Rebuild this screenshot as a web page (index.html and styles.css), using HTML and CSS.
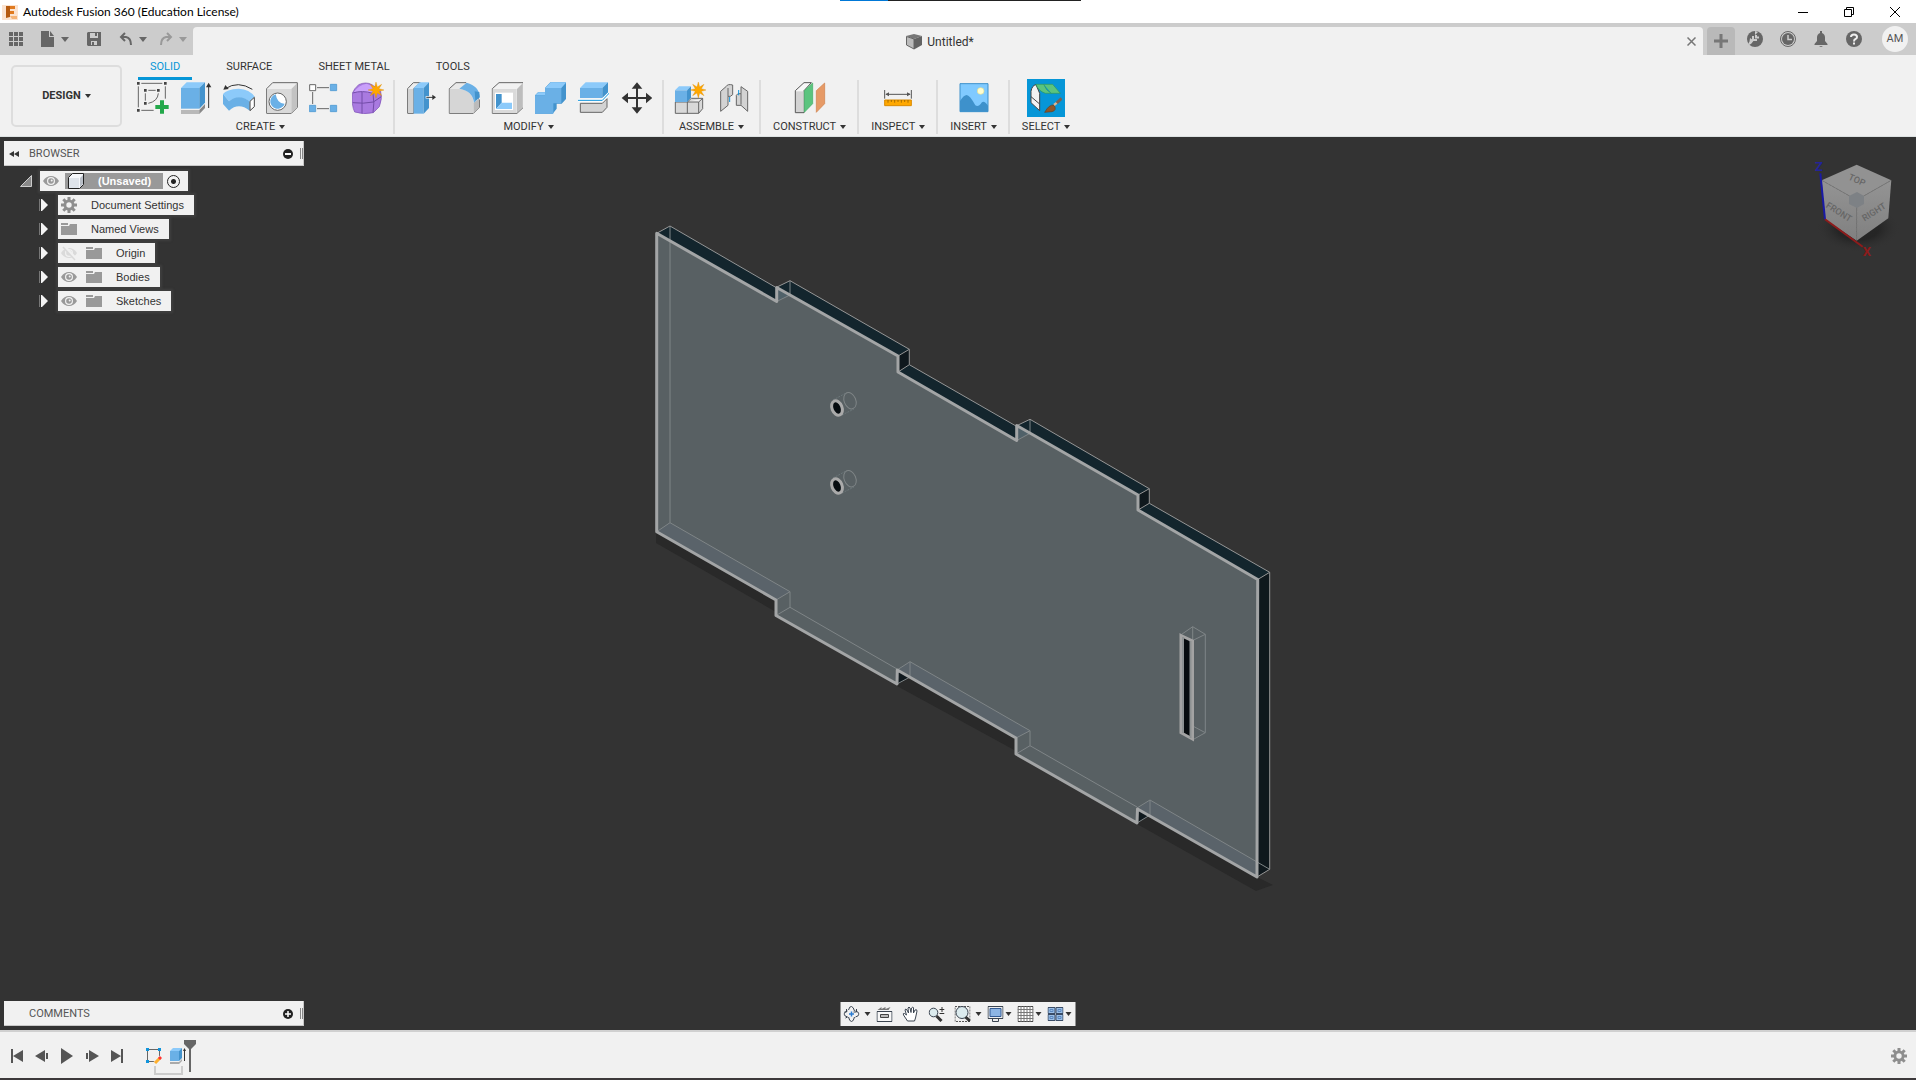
FILE: index.html
```html
<!DOCTYPE html>
<html lang="en">
<head>
    <meta charset="UTF-8">
    <meta name="viewport" content="width=device-width, initial-scale=1.0">
    <title>Autodesk Fusion 360 (Education License)</title>
    <link rel="stylesheet" href="styles.css">
</head>
<body>
    <!-- Shared icons -->
    <svg class="sprite" aria-hidden="true">
        <symbol id="star" viewBox="-24 -24 48 48"><path fill="#ffa800" stroke="#d98a00" stroke-width="1" d="M0-24 4-9 17-17 9-4 24 0 9 4 17 17 4 9 0 24-4 9-17 17-9 4-24 0-9-4-17-17-4-9Z"/></symbol>
        <symbol id="eye" viewBox="0 0 16 16"><path fill="#999" d="M0 8C2 4.500 5 3 8 3s6 1.500 8 5c-2 3.500-5 5-8 5S2 11.500 0 8Z"/><circle cx="8" cy="8" r="4" fill="#f1f1f1"/><circle cx="8" cy="8" r="2.800" fill="#999"/><circle cx="8.700" cy="7.500" r="1" fill="#f1f1f1"/></symbol>
        <symbol id="folder" viewBox="0 0 16 16"><path fill="#999" d="M0 5H8L9 3H16V14H0ZM0 2H7V4H0Z"/><path stroke="#f1f1f1" d="M0 4.500H7.500"/></symbol>
        <symbol id="gear" viewBox="0 0 16 16"><g stroke="#8e8e8e" stroke-width="3"><path d="M8 0V16M0 8H16M2.300 2.300 13.700 13.700M13.700 2.300 2.300 13.700"/></g><circle cx="8" cy="8" r="5.500" fill="#8e8e8e"/><circle cx="8" cy="8" r="2.700" fill="#f1f1f1"/></symbol>
        <symbol id="expand" viewBox="0 0 9 12"><path fill="#777" d="M0 0H1V12H0Z"/><path fill="#f4f4f4" d="M2 0H3L9 6 3 12H2Z"/></symbol>
    </svg>

    <!-- Title Bar -->
    <header class="title-bar">
        <div class="progress-line"></div>
        <svg class="app-logo" viewBox="0 0 16 16"><path fill="#fbe3d0" d="M0 1H16V16H0Z"/><path fill="#e07a1f" d="M4 2H13V5H8V7H12V10H8V13H4Z"/><path fill="#b55a10" d="M4 2H8V13L4 14Z"/><path fill="#f5b477" d="M8 12H15V15H10Z"/></svg>
        <h1>Autodesk Fusion 360 (Education License)</h1>
        <div class="window-buttons">
            <button aria-label="Minimize"><svg viewBox="0 0 12 12"><path d="M1 6.500H11"/></svg></button>
            <button aria-label="Restore"><svg viewBox="0 0 12 12"><path d="M1.500 3.500H8.500V10.500H1.500ZM3.500 3V1.500H10.500V8.500H9"/></svg></button>
            <button aria-label="Close"><svg viewBox="0 0 12 12"><path d="M1 1 11 11M11 1 1 11"/></svg></button>
        </div>
    </header>

    <!-- Document Tabs -->
    <div class="tab-bar">
        <div class="quick-access">
            <button aria-label="Data panel"><svg class="icon-14" viewBox="0 0 14 14" fill="#666"><path d="M0 0h4v4H0zM5 0h4v4H5zM10 0h4v4h-4zM0 5h4v4H0zM5 5h4v4H5zM10 5h4v4h-4zM0 10h4v4H0zM5 10h4v4H5zM10 10h4v4h-4z"/></svg></button>
            <button class="with-caret" aria-label="File"><svg class="icon-14" viewBox="0 0 14 16"><path fill="#666" d="M0 0H8V6H13V16H0Z"/><path fill="#666" d="M9 0 13 5H9Z"/></svg><span class="caret big"></span></button>
            <button aria-label="Save"><svg class="icon-14" viewBox="0 0 14 14"><path fill="#666" d="M0 1 1 0H14V14H1L0 13Z"/><path fill="#ccc" d="M3 1H11V6H3ZM4 9H10V13H4Z"/><path fill="#666" d="M8 1H10V4H8ZM5 10H7V13H5Z"/></svg></button>
            <button class="with-caret" aria-label="Undo"><svg class="icon-14" viewBox="0 0 14 14"><path fill="none" stroke="#666" stroke-width="2" d="M2 5H7Q12 6 12 13M6 1 2 5 6 9"/></svg><span class="caret big"></span></button>
            <button class="with-caret redo" aria-label="Redo"><svg class="icon-14" viewBox="0 0 14 14"><path fill="none" stroke="#999" stroke-width="2" d="M12 5H7Q2 6 2 13M8 1 12 5 8 9"/></svg><span class="caret big faded"></span></button>
        </div>
        <div class="document-tab">
            <div class="document-name">
                <svg class="icon-16" viewBox="0 0 16 16"><path fill="#777" d="M0 2 8 0 16 2 8 5Z"/><path fill="#bbb" stroke="#666" d="M.500 2.500 8 5V15L.500 11Z"/><path fill="#636363" d="M8 5 16 2V11L8 15.500Z"/></svg>
                <span>Untitled*</span>
            </div>
            <button aria-label="Close tab"><svg class="icon-9" viewBox="0 0 9 9"><path stroke="#777" stroke-width="1.500" d="M.500.500 8.500 8.500M8.500.500.500 8.500"/></svg></button>
        </div>
        <button class="new-tab" aria-label="New tab"><svg class="icon-14" viewBox="0 0 14 14"><path stroke="#777" stroke-width="3" d="M7 0V14M0 7H14"/></svg></button>
        <div class="account-bar">
            <button aria-label="Extensions"><svg class="icon-16" viewBox="0 0 16 16"><circle cx="8" cy="8" r="8" fill="#666"/><path fill="none" stroke="#ccc" stroke-width="2" d="M2 13 7 8M6 5V9H10M9 4V6.500H12"/><path fill="#ccc" d="M8 0 11 1 8 4ZM3 7 6 9 5 12 2 14Z"/></svg></button>
            <button aria-label="Job status"><svg class="icon-16" viewBox="0 0 16 16"><circle cx="8" cy="8" r="7.500" fill="none" stroke="#666"/><circle cx="8" cy="8" r="6" fill="#666"/><path fill="none" stroke="#ccc" stroke-width="1.500" d="M8 4V8.500H12"/></svg></button>
            <button aria-label="Notifications"><svg class="icon-16" viewBox="0 0 16 16"><path fill="#666" d="M7 0H9V2Q12 3 12 6.500V10L14.500 13V14H1.500V13L4 10V6.500Q4 3 7 2ZM6 15H10L8 16Z"/></svg></button>
            <button aria-label="Help"><svg class="icon-16" viewBox="0 0 16 16"><circle cx="8" cy="8" r="8" fill="#666"/><path fill="none" stroke="#eee" stroke-width="2" d="M5 6Q5 3.500 8 3.500T11 6Q11 7.500 9.500 8T8 10.500M8 11.500V13.500"/></svg></button>
            <button class="avatar">AM</button>
        </div>
    </div>

    <!-- Ribbon -->
    <div class="ribbon">
        <button class="workspace">DESIGN<span class="caret"></span></button>
        <div class="ribbon-main">
            <nav class="ribbon-tabs">
                <a class="active" href="#solid">SOLID</a>
                <a href="#surface">SURFACE</a>
                <a href="#sheet-metal">SHEET METAL</a>
                <a href="#tools">TOOLS</a>
            </nav>
            <div class="ribbon-groups">
                <div class="group">
                    <div class="tools">
                        <button aria-label="Create sketch"><svg viewBox="0 0 96 96"><path fill="none" stroke="#666" stroke-width="3" d="M13 4H76M4 13V76M85 13V50M13 85H50M34 25H56M25 34V56M34 64Q62 58 64 34"/><path fill="#444" d="M0 0h8v8H0zM81 0h8v8h-8zM0 81h8v8H0zM21 21h8v8h-8zM60 21h8v8h-8zM21 60h8v8h-8z"/><path fill="#23a84a" d="M69 55H81V69H95V81H81V95H69V81H55V69H69Z"/></svg></button>
                        <button aria-label="Extrude"><svg viewBox="0 0 96 96"><path fill="#8ccafa" d="M3 18 20 1H75L58 18Z"/><path fill="#6ab0e6" d="M3 18H58V80H3Z"/><path fill="#4393cd" d="M58 18 75 1V62L58 80Z"/><path fill="#b9b9b9" d="M3 84H58V96H3Z"/><path fill="#888" d="M58 84 75 66V78L58 96Z"/><path stroke="#333" stroke-width="3" d="M86 10V78"/><path fill="#333" d="M86 2 94 16H78Z"/></svg></button>
                        <button aria-label="Revolve"><svg viewBox="0 0 96 96"><path fill="#8ccafa" d="M0 36Q10 22 47 20 80 22 95 44L80 58Q47 36 18 58Z"/><path fill="#6ab0e6" d="M0 36 18 58Q47 34 80 58V86Q47 60 18 86L0 66Z"/><path fill="#fff" stroke="#444" stroke-width="3" d="M81 58 94 46V74L81 86Z"/><path fill="none" stroke="#333" stroke-width="3" d="M7 20Q45-5 88 22"/><path fill="#333" d="M1 23 7 9 17 21Z"/></svg></button>
                        <button aria-label="Hole"><svg viewBox="0 0 96 96"><path fill="#eee" stroke="#666" stroke-width="3" d="M2 20 20 2H94V76L76 94H2Z"/><path fill="#d9d9d9" d="M3 21H75V93H3Z"/><path fill="#c3c3c3" d="M76 21 93 4V75L76 92Z"/><circle cx="35" cy="59" r="26" fill="#fff" stroke="#666" stroke-width="3"/><path fill="#6ab0e6" d="M29 37A22 22 0 1 0 56 65Q34 66 29 37Z"/></svg></button>
                        <button aria-label="Pattern"><svg viewBox="0 0 96 96"><path stroke="#666" stroke-width="3" d="M24 17H60M11 30V66M24 80H60"/><path fill="#fff" stroke="#666" stroke-width="3" d="M2 8H20V26H2Z"/><path fill="#6ab0e6" stroke="#4393cd" stroke-width="2" d="M64 7H83V26H64ZM1 70H20V89H1ZM64 70H83V89H64Z"/></svg></button>
                        <button aria-label="Create form"><svg viewBox="0 0 96 96"><path fill="#a97ae0" stroke="#7b4eb4" stroke-width="2" d="M1 34Q6 20 20 8 42-2 60 8L86 28Q92 50 82 74L64 92Q34 99 8 90-2 70 1 34Z"/><path fill="#c9a0fa" d="M4 32Q20 8 44 5L80 20 62 34Q30 26 4 32Z"/><path fill="none" stroke="#734ca8" stroke-width="3" d="M2 33Q30 24 63 34L84 22M2 62Q34 66 64 60L88 44M30 30V94M63 34Q68 64 63 92"/><use href="#star" x="48" y="0" width="48" height="48"/></svg></button>
                    </div>
                    <button class="group-label">CREATE<span class="caret"></span></button>
                </div>
                <div class="group">
                    <div class="tools">
                        <button aria-label="Press pull"><svg viewBox="0 0 96 96"><path fill="#eee" stroke="#666" stroke-width="3" d="M8 20 25 2H46L26 20V94H8Z"/><path fill="#d3d3d3" d="M9 21H25V92H9Z"/><path fill="#8ccafa" d="M26 18 44 1H72L56 18Z"/><path fill="#6ab0e6" d="M26 18H56V95H26Z"/><path fill="#4393cd" d="M56 18 72 1V78L56 95Z"/><path stroke="#fff" stroke-width="7" d="M62 46H84"/><path stroke="#333" stroke-width="3" d="M64 46H86"/><path fill="#333" d="M93 46 82 38V54Z"/></svg></button>
                        <button aria-label="Fillet"><svg viewBox="0 0 96 96"><path fill="#e9e9e9" stroke="#666" stroke-width="3" d="M4 20 24 2H54L94 54V76L76 94H4Z"/><path fill="#d6d6d6" d="M5 21H34Q74 25 77 64V93H5Z"/><path fill="#bbb" d="M77 62 93 50V76L77 92Z"/><path fill="#6ab0e6" d="M34 20 56 2Q94 12 95 46L78 62Q74 26 34 20Z"/><path fill="#4393cd" d="M80 28 94 30 95 46 82 56Z"/></svg></button>
                        <button aria-label="Shell"><svg viewBox="0 0 96 96"><path fill="#f2f2f2" stroke="#666" stroke-width="3" d="M4 20 24 2H97V76L78 94H4Z"/><path fill="#dadada" d="M5 21H77V93H5Z"/><path fill="#bdbdbd" d="M78 21 95 4V75L78 92Z"/><path fill="#fff" d="M12 32H66V84H12Z"/><path fill="#4393cd" d="M15 36H32V62L15 81Z"/><path fill="#8ccafa" d="M32 62H63V81H15Z"/></svg></button>
                        <button aria-label="Combine"><svg viewBox="0 0 96 96"><path fill="#4393cd" d="M3 40 12 31H33V18L49 1H97V50L83 65H68V80L56 95H3Z"/><path fill="#8ccafa" d="M4 40 13 31H34V18L50 1H97L82 18H38L33 40Z"/><path fill="#6ab0e6" d="M3 40H33V18H82V64H58V95H3Z"/></svg></button>
                        <button aria-label="Split body"><svg viewBox="0 0 96 96"><path fill="#8ccafa" d="M9 18 26 1H93L76 18Z"/><path fill="#6ab0e6" d="M9 18H76V48H9Z"/><path fill="#4393cd" d="M76 18 93 1V32L76 48Z"/><path fill="#d3d3d3" stroke="#666" stroke-width="3" d="M10 64H76L90 50V76L76 91H10Z"/><path fill="none" stroke="#fff" stroke-width="9" d="M3 55H76L97 34"/><path fill="none" stroke="#0f94dc" stroke-width="3" d="M3 55H76L97 33"/></svg></button>
                        <button aria-label="Move"><svg viewBox="0 0 96 96"><path fill="#333" d="M51 1 67 20H54V45H78V32L97 48 78 64V51H54V76H67L51 95 35 76H48V51H24V64L5 48 24 32V45H48V20H35Z"/></svg></button>
                    </div>
                    <button class="group-label">MODIFY<span class="caret"></span></button>
                </div>
                <div class="group">
                    <div class="tools">
                        <button aria-label="New component"><svg viewBox="0 0 96 96"><path fill="#d9d9d9" stroke="#666" stroke-width="3" d="M4 60H40L52 49H86V80L74 94H4ZM40 60V94M40 60H74L86 49M74 60V94"/><path fill="#8ccafa" d="M3 25 15 13H51L39 25Z"/><path fill="#6ab0e6" d="M3 25H39V60H3Z"/><path fill="#4393cd" d="M39 25 51 13V47L39 60Z"/><use href="#star" x="49" y="0" width="48" height="48"/></svg></button>
                        <button aria-label="Joint"><svg viewBox="0 0 96 96"><path fill="#d3d3d3" stroke="#666" stroke-width="3" d="M11 28 28 13Q32 5 47 9V38L40 43H33V70L11 88ZM72 14 92 28V88L72 70H58V40Q60 33 72 35Z"/><path stroke="#666" stroke-width="3" d="M33 18V43M72 35V68"/><path stroke="#0f94dc" stroke-width="3" d="M38 45V60M65 24V40"/></svg></button>
                    </div>
                    <button class="group-label">ASSEMBLE<span class="caret"></span></button>
                </div>
                <div class="group single">
                    <div class="tools">
                        <button aria-label="Construct plane"><svg viewBox="0 0 96 96"><path fill="#f7f7f7" stroke="#555" stroke-width="3" d="M4 26 30 2H52L30 26V92H4Z"/><path fill="#d3d3d3" d="M6 28H29V90H6Z"/><path fill="#5bc47e" stroke="#3eaa62" stroke-width="2" d="M31 26 56 3V65L31 91Z"/><path fill="#e69a66" stroke="#cf7f49" stroke-width="2" d="M67 26 92 3V65L67 91Z"/></svg></button>
                    </div>
                    <button class="group-label">CONSTRUCT<span class="caret"></span></button>
                </div>
                <div class="group single">
                    <div class="tools">
                        <button aria-label="Measure"><svg viewBox="0 0 96 96"><path stroke="#555" stroke-width="3" d="M8 24V50M88 24V50M12 37H84"/><path fill="#555" d="M10 37 21 31V43ZM86 37 75 31V43Z"/><path fill="#ffa800" stroke="#d98a00" stroke-width="3" d="M8 54H88V71H8Z"/><path stroke="#7c5200" stroke-width="2" d="M18 54V62M28 54V60M38 54V62M48 54V60M58 54V62M68 54V60M78 54V62"/></svg></button>
                    </div>
                    <button class="group-label">INSPECT<span class="caret"></span></button>
                </div>
                <div class="group single">
                    <div class="tools">
                        <button aria-label="Insert image"><svg viewBox="0 0 96 96"><path fill="#80caff" stroke="#3e91cb" stroke-width="3" d="M6 5H90V89H6Z"/><path fill="#3e91cb" d="M6 57Q17 39 26 39T52 70Q60 76 68 66 76 50 90 71V89H6Z"/><circle cx="68" cy="27" r="10" fill="#fffdd0" stroke="#e5df8f" stroke-width="2"/></svg></button>
                    </div>
                    <button class="group-label">INSERT<span class="caret"></span></button>
                </div>
                <div class="group single last">
                    <div class="tools">
                        <button class="selected" aria-label="Select"><svg viewBox="0 0 96 96"><path fill="#f2f2f2" stroke="#444" stroke-width="3" d="M3 28Q6 10 18 8L29 34V86L3 62ZM3 44 29 66"/><path fill="#5bc47e" stroke="#32975a" stroke-width="2" d="M18 7H68L91 34H46Q24 26 18 7ZM41 7Q48 26 64 34"/><path fill="#8e5628" stroke="#644021" stroke-width="2" d="M44 91Q57 67 72 69 82 85 66 89Z"/><path stroke="#dab695" stroke-width="7" d="M72 69 81 62"/><path stroke="#7b604f" stroke-width="9" d="M80 63 95 49"/></svg></button>
                    </div>
                    <button class="group-label">SELECT<span class="caret"></span></button>
                </div>
            </div>
        </div>
    </div>

    <!-- Model Viewport -->
    <main class="viewport">
        <svg class="model" viewBox="0 137 1916 893" aria-label="Tabbed plate">
            <path fill="#292929" d="M656 532 776 600V612L656 543ZM897 684 1016 738V750ZM897 670 1016 738V751L897 686ZM1137 810 1257 877 1273 885 1256 891 1137 824Z"/>
            <!-- top faces -->
            <path fill="#13252d" d="M656.700 233.300 670 226 776 287V301.500ZM776.700 287.500 790 280.700 909.300 349.300 898 356ZM898 372 909.300 364.700 1016.700 426V440.500ZM1016.700 425.500 1030 419.300 1149.300 488.700 1138 495ZM1138 510 1149.300 503.300 1269.700 572.300 1257.700 579.500Z"/>
            <!-- right faces -->
            <path fill="#0f181d" d="M898 356 909.300 349.300V364.700L898 372ZM1138 495 1149.300 488.700V503.300L1138 510ZM1257.700 579.500 1269.700 572.300V869.300L1257 877ZM897 684V670L910 677ZM1137 823V809L1150 815Z"/>
            <path fill="#586063" d="M656.700 233.300 776.700 301.500V287.500L898 356V372L1016.700 440.500V425.500L1138 495V510L1257.700 579.500 1257 877 1137.500 809 1137 823 1016 754V738L897.300 670 897 684 776 615.500V600L656.700 531.700Z"/>
            <path fill="#5a636a" d="M670 522.700 790 591.700 776 600 656.700 531.700ZM910 661.700 1030 730.700 1016 738 897 670ZM1150 800 1257 862V877L1137.500 809Z"/>
            <path fill="#506169" d="M776.700 287.500 790 295 776.700 301.500ZM1016.700 425.500 1030 433.300 1016.700 440.500Z"/>
            <!-- hidden edges -->
            <g fill="none" stroke="#7f8587">
                <path d="M670 226V522.700L790 591.700V607.300L897 669M656.700 531.700 670 522.700M776 600 790 591.700M776 615.500 790 607.300M897 670 910 661.700 1030 730.700V745.700L1137 807M910 661.700V677L897 684M1016 738 1030 730.700M1016 754 1030 745.700M1137 808 1150 800 1269.700 869.300M1150 800V815L1137 823M776.700 301.500 790 295V280.700M1016.700 440.500 1030 433.300V419.300"/>
                <path d="M1180.700 635 1192.700 626.700 1205.300 634.300V732.700L1192.300 740M1192.300 640.700 1205.300 634.300M1192.700 626.700V640M1180.700 732.700 1192.700 726 1205.300 732.700"/>
                <ellipse cx="850" cy="400.700" rx="5.800" ry="8.500" transform="rotate(-22 850 400.700)"/>
                <ellipse cx="850" cy="478.700" rx="5.800" ry="8.500" transform="rotate(-22 850 478.700)"/>
                <path stroke-dasharray="2 1" stroke="#6b7679" d="M833 400 846 393M842 415 854 409M833 478 846 471M842 493 854 487"/>
            </g>
            <g fill="none" stroke="#969696">
                <path d="M656.700 233.300 670 226 776 287.500 790 280.700 909.300 349.300V364.700L1016 426 1030 419.300 1149.300 488.700V503.300L1269.700 572.300V869.300L1257 877M898 356 909.300 349.300M898 372 909.300 364.700M1138 495 1149.300 488.700M1138 510 1149.300 503.300M1257.700 579.500 1269.700 572.300"/>
            </g>
            <!-- front outline -->
            <path fill="none" stroke="#a3a5a6" stroke-width="3" stroke-linejoin="round" d="M656.700 233.300 776.700 301.500V287.500L898 356V372L1016.700 440.500V425.500L1138 495V510L1257.700 579.500 1257 877 1137.500 809 1137 823 1016 754V738L897.300 670 897 684 776 615.500V600L656.700 531.700Z"/>
            <path fill="#070b0e" stroke="#a3a3a3" stroke-width="3" d="M1181 635.500 1192.500 641V739L1181 732.700Z"/>
            <path stroke="#8d9192" stroke-width="2" d="M1183 637V733M1190.500 641V738"/>
            <g fill="#060c10" stroke="#aaa" stroke-width="3">
                <ellipse cx="837" cy="408" rx="5" ry="7.500" transform="rotate(-22 837 408)"/>
                <ellipse cx="837" cy="486" rx="5" ry="7.500" transform="rotate(-22 837 486)"/>
            </g>
        </svg>

        <!-- Browser -->
        <section class="browser">
            <div class="panel">
                <button aria-label="Collapse"><svg class="icon-10" viewBox="0 0 10 10"><path fill="#333" d="M0 5 5 2V8ZM5 5 10 2V8Z"/></svg></button>
                <h2>BROWSER</h2>
                <button aria-label="Hide browser"><svg class="icon-10" viewBox="0 0 10 10"><circle cx="5" cy="5" r="5" fill="#222"/><path stroke="#fff" stroke-width="2" d="M2 5H8"/></svg></button>
                <span class="grip"></span>
            </div>
            <ul class="tree">
                <li class="root">
                    <svg class="icon-12" viewBox="0 0 12 12"><path fill="#888" stroke="#ccc" d="M.500 11.500 11.500.500V11.500Z"/></svg>
                    <div class="node">
                        <svg class="icon-16"><use href="#eye"/></svg>
                        <label class="selected-name" for="activeComponent">
                            <svg class="icon-16" viewBox="0 0 16 16"><path fill="#f5f7fa" stroke="#222" d="M.500 4.500 4.500.500H15.500V11.500L11.500 15.500H.500Z"/><path fill="#dfe4ea" d="M1 5H11V15H1Z"/><path fill="#b9bfc7" d="M12 5 15 2V11L12 14Z"/></svg>
                            <span>(Unsaved)</span>
                        </label>
                        <input type="radio" id="activeComponent" name="component" checked>
                    </div>
                </li>
                <li>
                    <svg class="arrow"><use href="#expand"/></svg>
                    <a class="node" href="#settings"><svg class="icon-16"><use href="#gear"/></svg><span>Document Settings</span></a>
                </li>
                <li>
                    <svg class="arrow"><use href="#expand"/></svg>
                    <a class="node" href="#views"><svg class="icon-16"><use href="#folder"/></svg><span>Named Views</span></a>
                </li>
                <li>
                    <svg class="arrow"><use href="#expand"/></svg>
                    <a class="node" href="#origin"><svg class="icon-16 hidden-eye" viewBox="0 0 16 16"><use href="#eye" width="16" height="16"/><path stroke="#f1f1f1" stroke-width="3" d="M3 1 15 14"/><path stroke="#999" stroke-width="1.500" d="M2 2 14 15"/></svg><svg class="icon-16"><use href="#folder"/></svg><span>Origin</span></a>
                </li>
                <li>
                    <svg class="arrow"><use href="#expand"/></svg>
                    <a class="node" href="#bodies"><svg class="icon-16"><use href="#eye"/></svg><svg class="icon-16"><use href="#folder"/></svg><span>Bodies</span></a>
                </li>
                <li>
                    <svg class="arrow"><use href="#expand"/></svg>
                    <a class="node" href="#sketches"><svg class="icon-16"><use href="#eye"/></svg><svg class="icon-16"><use href="#folder"/></svg><span>Sketches</span></a>
                </li>
            </ul>
        </section>

        <!-- View Cube -->
        <svg class="view-cube" viewBox="1808 152 96 112">
            <defs>
                <radialGradient id="cubeShadow"><stop offset="0.500" stop-color="#1c1c1c" stop-opacity=".6"/><stop offset="1" stop-color="#333" stop-opacity="0"/></radialGradient>
                <linearGradient id="cubeSide" x2="0" y2="1"><stop offset="0" stop-color="#949494"/><stop offset="1" stop-color="#808080"/></linearGradient>
            </defs>
            <ellipse cx="1858" cy="228" rx="42" ry="24" fill="url(#cubeShadow)"/>
            <path fill="#929292" d="M1856.700 164.700 1891.300 180.300 1856.700 200 1821.700 180.300Z"/>
            <path fill="url(#cubeSide)" d="M1821.700 180.300 1856.700 200V240.700L1825 219.300Z"/>
            <path fill="url(#cubeSide)" d="M1891.300 180.300 1856.700 200V240.700L1888.300 218.300Z"/>
            <path fill="none" stroke="#777" stroke-dasharray="3 1" d="M1821.700 180.300 1856.700 200 1891.300 180.300M1856.700 200V240"/>
            <path fill="#7d8185" d="M1849 196 1857 192 1864 196V204L1857 208 1849 204Z"/>
            <path stroke="#1a1aa6" stroke-width="2" d="M1820.300 173.300 1825 219.300"/>
            <path stroke="#8e1b1b" stroke-width="2" d="M1825 219.300 1862.700 246.700"/>
            <g class="cube-text">
                <text x="1857" y="183" transform="rotate(24 1857 180)">TOP</text>
                <text x="1839" y="215" transform="rotate(32 1839 212)">FRONT</text>
                <text x="1874" y="215" transform="rotate(-32 1874 212)">RIGHT</text>
            </g>
            <text class="axis z" x="1819" y="171">Z</text>
            <text class="axis x" x="1867" y="256">X</text>
        </svg>

        <!-- Comments -->
        <section class="panel comments">
            <h2>COMMENTS</h2>
            <button aria-label="Add comment"><svg class="icon-10" viewBox="0 0 10 10"><circle cx="5" cy="5" r="5" fill="#222"/><path stroke="#fff" stroke-width="1.500" d="M2 5H8M5 2V8"/></svg></button>
            <span class="grip"></span>
        </section>

        <!-- Navigation Bar -->
        <div class="nav-bar">
            <button class="with-caret" aria-label="Orbit"><svg class="icon-16" viewBox="0 0 16 16"><g fill="none" stroke="#3b4450"><path d="M5 4Q6 0 8 .500T11 5M5 11Q6 15.500 8 15.500T11 11M4 5Q.500 6 .500 8T4 11M12 11Q15.500 10 15.500 8T12 5M3 3V6H1M13 3V6H10M2 12 4 11"/></g><path stroke="#2b7bd0" stroke-width="1.500" d="M8 5.500V10.500M5.500 8H10.500"/></svg><span class="caret"></span></button>
            <button aria-label="Look at"><svg class="icon-16" viewBox="0 0 16 16"><path fill="#777" d="M1 4 5 1V3L9 1V3L14 1 12 4Z"/><path fill="#f8f8f8" stroke="#3b4450" d="M.500 5.500H15.500V15.500H.500Z"/><path fill="#bbb" stroke="#444" d="M4 8.500H12V11.500H4Z"/></svg></button>
            <button aria-label="Pan"><svg class="icon-16" viewBox="0 0 16 16"><path fill="#fff" stroke="#3b4450" d="M5 15 1 9Q0 7 2 7.500L4 9 2.500 4Q3 2 4.500 4L6 7 5.500 2Q6.500 0 7.500 2L8.500 6.500 9 2Q10.500 0 11 2V7L12.500 4Q14.500 3 14.500 5L13 12 12 15Z"/></svg></button>
            <button aria-label="Zoom"><svg class="icon-16" viewBox="0 0 16 16"><circle cx="5" cy="6.500" r="4.300" fill="#dcebee" stroke="#3b4450"/><path stroke="#333" stroke-width="3" d="M8 10 13 15"/><path stroke="#333" d="M11 3.500H16M13.500 1V6M11 7.500H16"/></svg></button>
            <button class="with-caret" aria-label="Zoom window"><svg class="icon-16" viewBox="0 0 16 16"><path fill="none" stroke="#555" stroke-dasharray="2 1" d="M.500.500H15.500V15.500H.500Z"/><circle cx="7.500" cy="6.500" r="6" fill="#dcebee" stroke="#3b4450"/><path stroke="#333" stroke-width="3" d="M11 11 15.500 15"/></svg><span class="caret"></span></button>
            <button class="with-caret tight" aria-label="Display settings"><svg class="icon-16" viewBox="0 0 16 16"><path fill="#eee" stroke="#3b4450" d="M.500.500H15.500V12.500H.500ZM5 13V15.500H11V13"/><path fill="#8db5e4" stroke="#335b94" d="M2.500 2.500H13.500V10.500H2.500Z"/></svg><span class="caret"></span></button>
            <button class="with-caret tight" aria-label="Grid"><svg class="icon-16" viewBox="0 0 16 16"><path fill="#fff" stroke="#444" d="M.500.500H15.500V15.500H.500Z"/><path stroke="#777" d="M3.500 0V16M6.500 0V16M9.500 0V16M12.500 0V16M0 3.500H16M0 6.500H16M0 9.500H16M0 12.500H16"/></svg><span class="caret"></span></button>
            <button class="with-caret tight" aria-label="Viewports"><svg class="icon-16" viewBox="0 0 16 16"><path fill="#9cc0e8" stroke="#3a4c66" d="M.500 1.500H7.500V7.500H.500ZM8.500 1.500H15.500V7.500H8.500ZM.500 8.500H7.500V14.500H.500ZM8.500 8.500H15.500V14.500H8.500Z"/><path fill="none" stroke="#5b87be" d="M2.500 3.500H5.500V5.500H2.500ZM10.500 3.500H13.500V5.500H10.500ZM2.500 10.500H5.500V12.500H2.500ZM10.500 10.500H13.500V12.500H10.500Z"/></svg><span class="caret"></span></button>
        </div>
    </main>

    <!-- Timeline -->
    <footer class="timeline">
        <div class="playback">
            <button aria-label="Go to start"><svg viewBox="0 0 14 16"><path fill="#555" d="M1 1H3V15H1ZM3 8 13 2V14Z"/></svg></button>
            <button aria-label="Step back"><svg viewBox="0 0 14 16"><path fill="#555" d="M0 8 10 2V14ZM11 5H13V11H11Z"/></svg></button>
            <button aria-label="Play"><svg viewBox="0 0 14 16"><path fill="#555" d="M1 0 13 8 1 16Z"/></svg></button>
            <button aria-label="Step forward"><svg viewBox="0 0 14 16"><path fill="#555" d="M14 8 4 2V14ZM1 5H3V11H1Z"/></svg></button>
            <button aria-label="Go to end"><svg viewBox="0 0 14 16"><path fill="#555" d="M11 1H13V15H11ZM11 8 1 2V14Z"/></svg></button>
        </div>
        <div class="features">
            <button aria-label="Sketch1"><svg class="icon-16" viewBox="0 0 16 16"><path fill="none" stroke="#666" d="M1.500 1.500H13.500V13.500H1.500Z"/><path fill="#0f94dc" d="M0 0h3v3H0zM12 0h3v3h-3zM0 12h3v3H0z"/><path stroke="#f1f1f1" stroke-width="5" d="M9 16 16 9"/><path stroke="#ffb02e" stroke-width="3" d="M9 15 14 10"/><path stroke="#f33" stroke-width="3" d="M13 11 15 9"/></svg></button>
            <button aria-label="Extrude1"><svg class="icon-16" viewBox="0 0 16 16"><path fill="#8ccafa" d="M0 3 3 0H12L9 3Z"/><path fill="#6ab0e6" d="M0 3H9V13H0Z"/><path fill="#4393cd" d="M9 3 12 0V10L9 13Z"/><path fill="#aaa" d="M0 14H9L12 11V13L9 16H0Z"/><path stroke="#333" d="M14.500 2V13"/><path fill="#333" d="M14.500 0 16 3H13Z"/></svg></button>
        </div>
        <svg class="marker" viewBox="0 0 12 32"><path fill="#666" d="M0 0H12V4L7 9V32H5V9L0 4Z"/></svg>
        <button class="settings" aria-label="Timeline settings"><svg class="icon-16"><use href="#gear"/></svg></button>
    </footer>
</body>
</html>
```

FILE: styles.css
```css
/* General Styles */
* {
    box-sizing: border-box;
}

body {
    margin: 0;
    height: 100vh;
    display: flex;
    flex-direction: column;
    overflow: hidden;
    font-family: Roboto, "Liberation Sans", sans-serif;
    font-size: 11px;
    line-height: 14px;
    color: #333;
    background-color: #f1f1f1;
}

button {
    display: flex;
    align-items: center;
    justify-content: center;
    padding: 0;
    border: none;
    background: none;
    font: inherit;
    color: inherit;
    cursor: pointer;
}

a {
    color: inherit;
    text-decoration: none;
}

h1, h2 {
    margin: 0;
    font-size: inherit;
    font-weight: normal;
}

svg {
    display: block;
    flex-shrink: 0;
}

.sprite {
    position: absolute;
    width: 0;
    height: 0;
}

.icon-9 { width: 9px; height: 9px; }
.icon-10 { width: 10px; height: 10px; }
.icon-12 { width: 12px; height: 12px; }
.icon-14 { width: 14px; height: 16px; }
.icon-16 { width: 16px; height: 16px; }

.caret {
    margin-left: 4px;
    border: 3px solid transparent;
    border-top: 4px solid #333;
    border-bottom: none;
}

.caret.big {
    margin-left: 6px;
    border-width: 5px 4px 0;
    border-top-color: #666;
}

.caret.faded {
    border-top-color: #999;
}

/* Title Bar */
.title-bar {
    position: relative;
    display: flex;
    align-items: center;
    height: 23px;
    padding: 0 15px 0 2px;
    background: #fff;
    color: #000;
}

.title-bar h1 {
    flex: 1;
    margin-left: 5px;
    font-family: Lato, "Open Sans", sans-serif;
    font-size: 12px;
}

.app-logo {
    width: 16px;
    height: 16px;
}

.progress-line {
    position: absolute;
    top: 0;
    left: 840px;
    width: 241px;
    height: 1px;
    background: linear-gradient(to right, #0078d7 20%, #222 20%);
}

.window-buttons {
    display: flex;
    gap: 34px;
}

.window-buttons svg {
    width: 12px;
    height: 12px;
    fill: none;
    stroke: #000;
}

/* Document Tabs */
.tab-bar {
    display: flex;
    align-items: flex-end;
    height: 32px;
    background: #ccc;
}

.quick-access {
    display: flex;
    align-items: center;
    gap: 18px;
    height: 32px;
    width: 193px;
    padding-left: 9px;
}

.quick-access .redo {
    margin-left: -6px;
}

.document-tab {
    flex: 1;
    display: flex;
    align-items: center;
    height: 28px;
    padding-right: 7px;
    background: #f1f1f1;
    border-radius: 4px 4px 0 0;
}

.document-name {
    flex: 1;
    display: flex;
    align-items: center;
    justify-content: center;
    gap: 5px;
    padding-top: 1px;
    font-size: 12px;
}

.new-tab {
    width: 28px;
    height: 28px;
    margin-left: 4px;
    background: #b9b9b9;
    border-radius: 4px 4px 0 0;
}

.account-bar {
    display: flex;
    align-items: center;
    gap: 17px;
    height: 32px;
    padding: 0 8px 0 12px;
}

.avatar {
    width: 26px;
    height: 26px;
    margin-left: 3px;
    border-radius: 50%;
    background: #f1f1f1;
    color: #555;
}

/* Ribbon */
.ribbon {
    display: flex;
    align-items: flex-start;
    height: 82px;
    padding-left: 11px;
    background: #f1f1f1;
    border-bottom: 1px solid #dde2e2;
}

.workspace {
    width: 111px;
    height: 62px;
    margin-top: 10px;
    border: 2px solid #ddd;
    border-radius: 5px;
    font-size: 11px;
    font-weight: bold;
}

.ribbon-main {
    margin-left: 5px;
}

.ribbon-tabs {
    display: flex;
    height: 25px;
    padding-left: 11px;
    gap: 22px;
}

.ribbon-tabs a {
    padding: 5px 12px 0;
}

.ribbon-tabs .active {
    border-bottom: 3px solid #0696d7;
    color: #0696d7;
}

.ribbon-groups {
    display: flex;
}

.group {
    height: 54px;
    padding: 0 10px;
    border-right: 2px solid #ddd;
    display: flex;
    flex-direction: column;
    align-items: center;
    justify-content: space-between;
}

.group:first-child {
    padding-right: 9px;
}

.group.single {
    padding: 0 11px 0 12px;
}

.group.last {
    border-right: none;
}

.tools {
    display: flex;
    gap: 11px;
    height: 36px;
}

.tools svg {
    width: 32px;
    height: 32px;
}

.tools .selected {
    width: 38px;
    height: 38px;
    margin-top: -1px;
    background: #0696d7;
}

/* Model Viewport */
.viewport {
    position: relative;
    flex: 1;
    min-height: 0;
    background: #333;
}

.model {
    width: 100%;
    height: 100%;
}

.browser {
    position: absolute;
    top: 4px;
    left: 4px;
    width: 300px;
}

.panel {
    display: flex;
    align-items: center;
    height: 25px;
    padding: 1px 0 0 5px;
    background: #f1f1f1;
    border: solid #c8c8c8;
    border-width: 0 1px 1px 0;
    color: #555;
}

.panel h2 {
    flex: 1;
    margin-left: 10px;
}

.grip {
    width: 3px;
    height: 11px;
    margin-left: 7px;
    border: solid #888;
    border-width: 0 1px;
}

.comments {
    position: absolute;
    left: 4px;
    bottom: 4px;
    width: 300px;
}

.comments h2 {
    margin-left: 20px;
}

/* Browser Tree */
.tree {
    list-style: none;
    margin: 5px 0 0;
    padding: 0 0 0 35px;
    display: flex;
    flex-direction: column;
    gap: 4px;
}

.tree li {
    display: flex;
    align-items: center;
    gap: 10px;
    height: 20px;
}

.tree .root {
    gap: 8px;
    margin-left: -19px;
}

.arrow {
    width: 9px;
    height: 12px;
}

.node {
    display: flex;
    align-items: center;
    gap: 9px;
    height: 20px;
    padding: 0 10px 0 3px;
    background: #f1f1f1;
    box-shadow: 0 0 2px 2px #3f3f3f;
}

.node span {
    margin-left: 5px;
    font-family: "Liberation Sans", Arial, sans-serif;
}

.hidden-eye {
    opacity: 0.250;
}

.root .node {
    gap: 4px;
    padding-right: 8px;
}

.selected-name {
    display: flex;
    align-items: center;
    gap: 9px;
    height: 16px;
    padding: 0 12px 0 3px;
    margin-left: 2px;
    background: #999;
    color: #fff;
    font-weight: bold;
}

.node input {
    appearance: none;
    width: 13px;
    height: 13px;
    margin: 0;
    border: 1px solid #222;
    border-radius: 50%;
    background: radial-gradient(circle, #222 2px, transparent 3px);
}

/* View Cube */
.view-cube {
    position: absolute;
    top: 15px;
    right: 12px;
    width: 96px;
    height: 112px;
}

.cube-text {
    font-size: 9px;
    font-weight: 500;
    fill: #666;
    text-anchor: middle;
}

.axis {
    font-size: 13px;
    font-weight: bold;
    text-anchor: middle;
}

.axis.z { fill: #23239a; }
.axis.x { fill: #8e1b1b; }

/* Navigation Bar */
.nav-bar {
    position: absolute;
    bottom: 4px;
    left: 50%;
    display: flex;
    align-items: center;
    gap: 10px;
    height: 24px;
    padding: 0 4px 0 3px;
    transform: translateX(-50%);
    background: #f1f1f1;
}

.nav-bar .caret {
    margin-left: 5px;
}

.nav-bar .tight .caret {
    margin-left: 2px;
}

.nav-bar .with-caret {
    margin-right: -4px;
}

.nav-bar .with-caret:last-child {
    margin-right: 0;
}

/* Timeline */
.timeline {
    display: flex;
    align-items: center;
    height: 50px;
    padding: 2px 9px 0 10px;
    background: #f1f1f1;
    border-top: 2px solid #d0d0d0;
    border-bottom: 2px solid #3d393b;
}

.playback {
    display: flex;
    gap: 11px;
}

.playback svg {
    width: 14px;
    height: 16px;
}

.features {
    position: relative;
    display: flex;
    gap: 8px;
    margin-left: 22px;
}

.features::after {
    content: "";
    position: absolute;
    top: 18px;
    left: 8px;
    width: 25px;
    height: 7px;
    border: 2px solid #ccc;
    border-top: none;
}

.marker {
    width: 12px;
    height: 32px;
    margin-left: -2px;
}

.settings {
    margin-left: auto;
}
```
